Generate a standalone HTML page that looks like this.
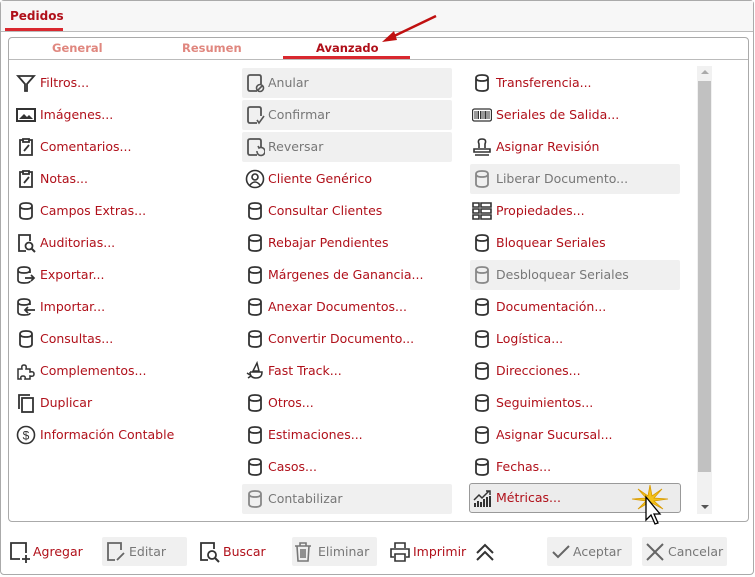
<!DOCTYPE html>
<html><head><meta charset="utf-8"><style>
*{box-sizing:border-box;margin:0;padding:0}
body{width:755px;height:576px;background:#fff;font-family:"DejaVu Sans","Liberation Sans",sans-serif;font-size:12px;position:relative;overflow:hidden}
.frame{position:absolute;left:0;top:0;width:754px;height:575px;border:1px solid #aaa;border-radius:4px;background:#fff}
.hdr{position:absolute;left:1px;top:1px;width:752px;height:31px;background:#f7f7f7;border-bottom:1px solid #bbb}
.ttl{position:absolute;left:10px;top:9px;font-weight:bold;color:#b0101a;font-size:12px}
.ttlu{position:absolute;left:5px;top:28px;width:58px;height:3px;background:#d9282f}
.panel{position:absolute;left:8px;top:37px;width:741px;height:485px;border:1px solid #aaa;border-radius:4px}
.tabs{position:absolute;left:9px;top:38px;width:739px;height:22px;border-bottom:1px solid #bbb}
.tab{position:absolute;top:41px;font-weight:bold;font-size:11.5px;color:#e0877f}
.tu{position:absolute;left:283px;top:56px;width:127px;height:3px;background:#d9282f}
.it{position:absolute;height:30px;line-height:30px;color:#b0101a;font-size:12.5px;white-space:nowrap}
.it svg{position:absolute;left:0;top:5px;width:20px;height:20px}
.it span{position:absolute;left:24px;top:0}
.dis{background:#f0f0f0;border-radius:2px;color:#777}
.dis span{color:#777}
.sb{position:absolute;left:697px;top:66px;width:15px;height:448px;background:#f1f1f1}
.th{position:absolute;left:698px;top:81px;width:13px;height:391px;background:#c1c1c1}
.btn{position:absolute;top:537px;height:29px;line-height:29px;font-size:12.5px;color:#b0101a;white-space:nowrap}
.btn svg{position:absolute;top:4px;left:0}
.btn span{position:absolute;top:0}
.bd{background:#f0f0f0;color:#777;border-radius:2px}
.bd span{color:#777}
.c{position:absolute;left:0;top:1px;width:755px;height:576px}
</style></head><body>
<svg width="0" height="0" style="position:absolute">
<defs>
<symbol id="db" viewBox="0 0 20 20"><path d="M4 5 Q4 2 10 2 Q16 2 16 5 V15 Q16 18 10 18 Q4 18 4 15 Z M4 5 Q4 8 10 8 Q16 8 16 5" fill="none" stroke="#333" stroke-width="1.8"/></symbol>
<symbol id="dbg" viewBox="0 0 20 20"><path d="M4 5 Q4 2 10 2 Q16 2 16 5 V15 Q16 18 10 18 Q4 18 4 15 Z M4 5 Q4 8 10 8 Q16 8 16 5" fill="none" stroke="#888" stroke-width="1.8"/></symbol>
<symbol id="doc" viewBox="0 0 20 20"><path d="M12 18 H5 Q3 18 3 16 V4 Q3 2 5 2 H14 Q16 2 16 4 V11" fill="none" stroke="#555" stroke-width="1.8"/></symbol>
</defs></svg>
<div class="frame"></div>
<div class="hdr"></div>
<div class="ttl">Pedidos</div><div class="ttlu"></div>
<div class="panel"></div>
<div class="tabs"></div>
<div class="tab" style="left:52px">General</div>
<div class="tab" style="left:182px">Resumen</div>
<div class="tab" style="left:316px;color:#b0101a">Avanzado</div>
<div class="tu"></div>
<svg style="position:absolute;left:378px;top:12px" width="62" height="34"><line x1="58" y1="4" x2="12" y2="26" stroke="#c01010" stroke-width="2.5"/><path d="M4 30 L16 19 L19 28 Z" fill="#c01010"/></svg>

<div class="c">
<!-- col1 -->
<div class="it" style="left:16px;top:67px"><svg viewBox="0 0 20 20"><path d="M2 3 H18 L11 11 V18 H9 V11 Z" fill="none" stroke="#333" stroke-width="1.8"/></svg><span>Filtros...</span></div>
<div class="it" style="left:16px;top:99px"><svg viewBox="0 0 20 20"><rect x="1" y="4" width="18" height="12" fill="none" stroke="#333" stroke-width="2"/><path d="M3 14 L8 9 L11 12 L13 10 L17 14 Z" fill="#333"/></svg><span>Imágenes...</span></div>
<div class="it" style="left:16px;top:131px"><svg viewBox="0 0 20 20"><path d="M7 3 H4 V18 H16 V3 H13 M7 2 H13 V5 H7 Z M8 14 L13 8" fill="none" stroke="#333" stroke-width="1.8"/></svg><span>Comentarios...</span></div>
<div class="it" style="left:16px;top:163px"><svg viewBox="0 0 20 20"><path d="M7 3 H4 V18 H16 V3 H13 M7 2 H13 V5 H7 Z M8 14 L13 8" fill="none" stroke="#333" stroke-width="1.8"/></svg><span>Notas...</span></div>
<div class="it" style="left:16px;top:195px"><svg><use href="#db"/></svg><span>Campos Extras...</span></div>
<div class="it" style="left:16px;top:227px"><svg viewBox="0 0 20 20"><path d="M10 18 H3 V2 H14 V8" fill="none" stroke="#333" stroke-width="1.8"/><circle cx="13" cy="13" r="3.5" fill="none" stroke="#333" stroke-width="1.8"/><path d="M15.5 15.5 L19 19" stroke="#333" stroke-width="2"/></svg><span>Auditorias...</span></div>
<div class="it" style="left:16px;top:259px"><svg viewBox="0 0 20 20"><path d="M14 8 V5 Q14 2 8 2 Q2 2 2 5 V15 Q2 18 8 18 Q14 18 14 16 M2 5 Q2 8 8 8 Q14 8 14 5 M9 13 H18 M15 10 L18 13 L15 16" fill="none" stroke="#333" stroke-width="1.7"/></svg><span>Exportar...</span></div>
<div class="it" style="left:16px;top:291px"><svg viewBox="0 0 20 20"><path d="M14 8 V5 Q14 2 8 2 Q2 2 2 5 V15 Q2 18 8 18 Q14 18 14 16 M2 5 Q2 8 8 8 Q14 8 14 5 M19 13 H9 M12 10 L9 13 L12 16" fill="none" stroke="#333" stroke-width="1.7"/></svg><span>Importar...</span></div>
<div class="it" style="left:16px;top:323px"><svg><use href="#db"/></svg><span>Consultas...</span></div>
<div class="it" style="left:16px;top:355px"><svg viewBox="0 0 20 20"><path d="M2 8 H6 Q5 4 8 4 Q11 4 10 8 H14 V11 Q18 10 18 13 Q18 16 14 15 V18 H9 Q10 15 7 15 Q4 15 5 18 H2 Z" fill="none" stroke="#333" stroke-width="1.5"/></svg><span>Complementos...</span></div>
<div class="it" style="left:16px;top:387px"><svg viewBox="0 0 20 20"><path d="M3 16 V2 H14" fill="none" stroke="#333" stroke-width="1.8"/><rect x="6" y="5" width="11" height="14" fill="none" stroke="#333" stroke-width="1.8"/></svg><span>Duplicar</span></div>
<div class="it" style="left:16px;top:419px"><svg viewBox="0 0 20 20"><circle cx="10" cy="10" r="8.5" fill="none" stroke="#333" stroke-width="1.6"/><text x="10" y="14.5" font-size="12" text-anchor="middle" fill="#333" font-family="Liberation Sans">$</text></svg><span>Información Contable</span></div>

<!-- col2 -->
<div class="it dis" style="left:242px;top:67px;width:210px"><svg viewBox="0 0 20 20" style="left:3px"><use href="#doc"/><circle cx="15" cy="15" r="3.5" fill="none" stroke="#555" stroke-width="1.6"/><path d="M12.5 17.5 L17.5 12.5" stroke="#555" stroke-width="1.6"/></svg><span style="left:26px">Anular</span></div>
<div class="it dis" style="left:242px;top:99px;width:210px"><svg viewBox="0 0 20 20" style="left:3px"><use href="#doc"/><path d="M12 15 L14 18 L19 11" fill="none" stroke="#555" stroke-width="1.6"/></svg><span style="left:26px">Confirmar</span></div>
<div class="it dis" style="left:242px;top:131px;width:210px"><svg viewBox="0 0 20 20" style="left:3px"><use href="#doc"/><path d="M12 14 A4 4 0 1 0 14 11 L13 9" fill="none" stroke="#555" stroke-width="1.6"/></svg><span style="left:26px">Reversar</span></div>
<div class="it" style="left:245px;top:163px"><svg viewBox="0 0 20 20"><circle cx="10" cy="10" r="8.5" fill="none" stroke="#333" stroke-width="1.6"/><circle cx="10" cy="8" r="3" fill="none" stroke="#333" stroke-width="1.6"/><path d="M5 16 Q10 10 15 16" fill="none" stroke="#333" stroke-width="1.6"/></svg><span style="left:23px">Cliente Genérico</span></div>
<div class="it" style="left:245px;top:195px"><svg><use href="#db"/></svg><span style="left:23px">Consultar Clientes</span></div>
<div class="it" style="left:245px;top:227px"><svg><use href="#db"/></svg><span style="left:23px">Rebajar Pendientes</span></div>
<div class="it" style="left:245px;top:259px"><svg><use href="#db"/></svg><span style="left:23px">Márgenes de Ganancia...</span></div>
<div class="it" style="left:245px;top:291px"><svg><use href="#db"/></svg><span style="left:23px">Anexar Documentos...</span></div>
<div class="it" style="left:245px;top:323px"><svg><use href="#db"/></svg><span style="left:23px">Convertir Documento...</span></div>
<div class="it" style="left:245px;top:355px"><svg viewBox="0 0 20 20"><path d="M8 10 L12 2 L14 10 Z M5 11 H17 Q17 17 11 17 Q5 17 5 11 M2 12 L5 14 M3 17 L6 15" fill="none" stroke="#333" stroke-width="1.5"/></svg><span style="left:23px">Fast Track...</span></div>
<div class="it" style="left:245px;top:387px"><svg><use href="#db"/></svg><span style="left:23px">Otros...</span></div>
<div class="it" style="left:245px;top:419px"><svg><use href="#db"/></svg><span style="left:23px">Estimaciones...</span></div>
<div class="it" style="left:245px;top:451px"><svg><use href="#db"/></svg><span style="left:23px">Casos...</span></div>
<div class="it dis" style="left:242px;top:483px;width:210px"><svg style="left:3px"><use href="#dbg"/></svg><span style="left:26px">Contabilizar</span></div>

<!-- col3 -->
<div class="it" style="left:472px;top:67px"><svg><use href="#db"/></svg><span>Transferencia...</span></div>
<div class="it" style="left:472px;top:99px"><svg viewBox="0 0 20 20"><rect x="0.5" y="4" width="19" height="12" rx="2" fill="none" stroke="#333" stroke-width="1.3"/><path d="M3 6 V14 M5 6 V14 M6.5 6 V14 M8.5 6 V14 M10 6 V14 M12 6 V14 M13.5 6 V14 M15 6 V14 M17 6 V14" stroke="#333" stroke-width="1"/></svg><span>Seriales de Salida...</span></div>
<div class="it" style="left:472px;top:131px"><svg viewBox="0 0 20 20"><path d="M7 11 V7 Q5 2 10 2 Q15 2 13 7 V11 M2 12 H18 V15 H2 Z M3 18 H17" fill="none" stroke="#333" stroke-width="1.6"/></svg><span>Asignar Revisión</span></div>
<div class="it dis" style="left:470px;top:163px;width:210px"><svg style="left:2px"><use href="#dbg"/></svg><span style="left:26px">Liberar Documento...</span></div>
<div class="it" style="left:472px;top:195px"><svg viewBox="0 0 20 20"><path d="M1 2h6v4H1zM9 2h10v4H9zM1 8h6v4H1zM9 8h10v4H9zM1 14h6v4H1zM9 14h10v4H9z" fill="none" stroke="#333" stroke-width="1.6"/></svg><span>Propiedades...</span></div>
<div class="it" style="left:472px;top:227px"><svg><use href="#db"/></svg><span>Bloquear Seriales</span></div>
<div class="it dis" style="left:470px;top:259px;width:210px"><svg style="left:2px"><use href="#dbg"/></svg><span style="left:26px">Desbloquear Seriales</span></div>
<div class="it" style="left:472px;top:291px"><svg><use href="#db"/></svg><span>Documentación...</span></div>
<div class="it" style="left:472px;top:323px"><svg><use href="#db"/></svg><span>Logística...</span></div>
<div class="it" style="left:472px;top:355px"><svg><use href="#db"/></svg><span>Direcciones...</span></div>
<div class="it" style="left:472px;top:387px"><svg><use href="#db"/></svg><span>Seguimientos...</span></div>
<div class="it" style="left:472px;top:419px"><svg><use href="#db"/></svg><span>Asignar Sucursal...</span></div>
<div class="it" style="left:472px;top:451px"><svg><use href="#db"/></svg><span>Fechas...</span></div>
<div class="it" style="left:469px;top:482px;width:212px;background:#ececec;border:1px solid #999;border-radius:3px"><svg viewBox="0 0 20 20" style="left:2px;top:4px"><path d="M2 12 L7 7 L10 10 L17 3 M14 3 H18 V7" fill="none" stroke="#333" stroke-width="1.5"/><path d="M3 19V15M6 19V13M9 19V14M12 19V11M15 19V9M18 19V8" stroke="#333" stroke-width="2"/></svg><span style="left:26px;line-height:28px">Métricas...</span></div>
<svg style="position:absolute;left:630px;top:482px" width="40" height="45"><path d="M20 2 L22 13 L32 6 L24 15 L38 16 L24 18 L33 26 L22 20 L20 30 L18 20 L8 26 L16 18 L2 16 L16 15 L8 6 L18 13 Z" fill="#f3c21a" stroke="#d89a00" stroke-width="0.8"/><path d="M16 14 V37 L21 32 L25 41 L28 40 L24 31 L30 31 Z" fill="#fff" stroke="#000" stroke-width="1.3"/></svg>
</div>

<div class="sb"></div><div class="th"></div>
<div style="position:absolute;left:701px;top:70px;width:0;height:0;border-left:4px solid transparent;border-right:4px solid transparent;border-bottom:4px solid #aaa"></div>
<div style="position:absolute;left:701px;top:505px;width:0;height:0;border-left:4px solid transparent;border-right:4px solid transparent;border-top:4px solid #555"></div>

<!-- bottom -->
<div class="btn" style="left:9px;width:80px"><svg width="22" height="22" viewBox="0 0 22 22"><path d="M11 18 H2 V2 H17 V12 M17 14 V22 M13 18 H21" fill="none" stroke="#333" stroke-width="1.8"/></svg><span style="left:24px">Agregar</span></div>
<div class="btn bd" style="left:102px;width:85px"><svg width="22" height="22" viewBox="0 0 22 22" style="left:3px"><path d="M10 19 H3 V2 H16 V9 M12 19 L19 12" fill="none" stroke="#666" stroke-width="1.8"/></svg><span style="left:27px">Editar</span></div>
<div class="btn" style="left:199px;width:70px"><svg width="22" height="22" viewBox="0 0 22 22"><path d="M9 19 H2 V2 H15 V8" fill="none" stroke="#333" stroke-width="1.8"/><circle cx="13" cy="14" r="4" fill="none" stroke="#333" stroke-width="1.8"/><path d="M16 17 L20 21" stroke="#333" stroke-width="2"/></svg><span style="left:24px">Buscar</span></div>
<div class="btn bd" style="left:292px;width:85px"><svg width="22" height="22" viewBox="0 0 22 22" style="left:0"><path d="M3 5 H19 M8 5 V2 H14 V5 M5 5 L6 20 H16 L17 5 M9 8 V17 M11 8 V17 M13 8 V17" fill="none" stroke="#777" stroke-width="1.6"/></svg><span style="left:26px">Eliminar</span></div>
<div class="btn" style="left:389px;width:80px"><svg width="22" height="22" viewBox="0 0 22 22"><path d="M6 7 V2 H16 V7 M5 16 H2 V8 H20 V16 H17 M6 13 H16 V20 H6 Z" fill="none" stroke="#333" stroke-width="1.6"/></svg><span style="left:24px">Imprimir</span></div>
<svg style="position:absolute;left:474px;top:542px" width="22" height="20"><path d="M3 11 L11 3 L19 11 M3 18 L11 10 L19 18" fill="none" stroke="#333" stroke-width="2"/></svg>
<div class="btn bd" style="left:547px;width:85px"><svg width="22" height="22" viewBox="0 0 22 22" style="left:3px"><path d="M3 11 L8 16 L19 5" fill="none" stroke="#666" stroke-width="2"/></svg><span style="left:26px">Aceptar</span></div>
<div class="btn bd" style="left:642px;width:85px"><svg width="22" height="22" viewBox="0 0 22 22" style="left:2px"><path d="M3 3 L19 19 M19 3 L3 19" stroke="#666" stroke-width="2"/></svg><span style="left:26px">Cancelar</span></div>
</body></html>
